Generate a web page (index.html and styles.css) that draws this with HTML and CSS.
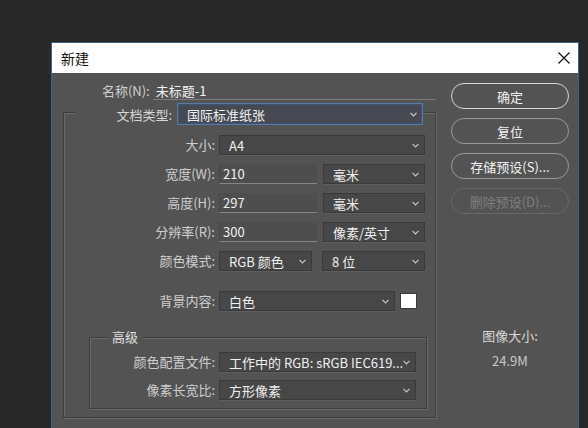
FILE: index.html
```html
<!DOCTYPE html>
<html lang="zh-CN">
<head>
<meta charset="utf-8">
<title>新建</title>
<link rel="stylesheet" href="styles.css">
</head>
<body>
<div class="page">
  <div class="dialog">
    <div class="titlebar">
      <span class="title">新建</span>
      <svg class="close" width="12" height="12" viewBox="0 0 12 12"><path d="M0.5 0.5L11.5 11.5M11.5 0.5L0.5 11.5" stroke="#111" stroke-width="1.2" fill="none"/></svg>
    </div>
    <div class="content">
      <div class="form">
        <div class="name-row">
          <span class="name-label">名称(N):</span>
          <span class="name-field">未标题-1</span>
        </div>
        <fieldset class="group main">
          <legend class="doctype">
            <span class="doc-label">文档类型:</span>
            <span class="select focus w-doc">国际标准纸张<svg class="chev" width="7" height="5" viewBox="0 0 7 5"><path d="M0.5 0.8L3.5 3.8L6.5 0.8" stroke="#d0d0d0" stroke-width="1.2" fill="none"/></svg></span>
          </legend>
          <div class="grid grid-main">
            <span class="label">大小:</span>
            <span class="select w-full">A4<svg class="chev" width="7" height="5" viewBox="0 0 7 5"><path d="M0.5 0.8L3.5 3.8L6.5 0.8" stroke="#c8c8c8" stroke-width="1.2" fill="none"/></svg></span>

            <span class="label">宽度(W):</span>
            <span class="pair">
              <span class="field w-num">210</span>
              <span class="select w-unit">毫米<svg class="chev" width="7" height="5" viewBox="0 0 7 5"><path d="M0.5 0.8L3.5 3.8L6.5 0.8" stroke="#c8c8c8" stroke-width="1.2" fill="none"/></svg></span>
            </span>

            <span class="label">高度(H):</span>
            <span class="pair">
              <span class="field w-num">297</span>
              <span class="select w-unit">毫米<svg class="chev" width="7" height="5" viewBox="0 0 7 5"><path d="M0.5 0.8L3.5 3.8L6.5 0.8" stroke="#c8c8c8" stroke-width="1.2" fill="none"/></svg></span>
            </span>

            <span class="label">分辨率(R):</span>
            <span class="pair">
              <span class="field w-num">300</span>
              <span class="select w-unit">像素/英寸<svg class="chev" width="7" height="5" viewBox="0 0 7 5"><path d="M0.5 0.8L3.5 3.8L6.5 0.8" stroke="#c8c8c8" stroke-width="1.2" fill="none"/></svg></span>
            </span>

            <span class="label">颜色模式:</span>
            <span class="pair gap10">
              <span class="select w-mode">RGB 颜色<svg class="chev" width="7" height="5" viewBox="0 0 7 5"><path d="M0.5 0.8L3.5 3.8L6.5 0.8" stroke="#c8c8c8" stroke-width="1.2" fill="none"/></svg></span>
              <span class="select w-bits">8 位<svg class="chev" width="7" height="5" viewBox="0 0 7 5"><path d="M0.5 0.8L3.5 3.8L6.5 0.8" stroke="#c8c8c8" stroke-width="1.2" fill="none"/></svg></span>
            </span>

            <span class="label spaced">背景内容:</span>
            <span class="pair gap5 spaced">
              <span class="select w-bg">白色<svg class="chev" width="7" height="5" viewBox="0 0 7 5"><path d="M0.5 0.8L3.5 3.8L6.5 0.8" stroke="#c8c8c8" stroke-width="1.2" fill="none"/></svg></span>
              <span class="swatch"></span>
            </span>
          </div>

          <fieldset class="group adv">
            <legend class="adv-legend">高级</legend>
            <div class="grid grid-adv">
              <span class="label">颜色配置文件:</span>
              <span class="select w-adv">工作中的 RGB: sRGB IEC619...<svg class="chev" width="7" height="5" viewBox="0 0 7 5"><path d="M0.5 0.8L3.5 3.8L6.5 0.8" stroke="#c8c8c8" stroke-width="1.2" fill="none"/></svg></span>

              <span class="label">像素长宽比:</span>
              <span class="select w-adv">方形像素<svg class="chev" width="7" height="5" viewBox="0 0 7 5"><path d="M0.5 0.8L3.5 3.8L6.5 0.8" stroke="#c8c8c8" stroke-width="1.2" fill="none"/></svg></span>
            </div>
          </fieldset>
        </fieldset>
      </div>

      <div class="side">
        <div class="btn primary">确定</div>
        <div class="btn">复位</div>
        <div class="btn">存储预设(S)...</div>
        <div class="btn disabled">删除预设(D)...</div>
        <div class="size-title">图像大小:</div>
        <div class="size-value">24.9M</div>
      </div>
    </div>
  </div>
</div>
</body>
</html>
```

FILE: styles.css
```css
html, body {
  margin: 0;
  padding: 0;
}

body {
  width: 588px;
  height: 428px;
  overflow: hidden;
  background: #282828;
  font-family: "Noto Sans CJK SC", "Noto Sans", sans-serif;
  font-size: 13px;
  color: #d2d2d2;
}

.page {
  padding: 42px 0 0 51px;
}

.dialog {
  width: 526px;
  height: 385px;
  border: 1px solid #3e6288;
  border-bottom: none;
  background: #535353;
}

.titlebar {
  height: 30px;
  background: #ffffff;
  display: flex;
  align-items: center;
  justify-content: space-between;
  padding: 0 8px 0 9px;
}

.title {
  color: #111;
  font-size: 14px;
  line-height: 16px;
}

.close {
  display: block;
}

.content {
  display: flex;
}

.form {
  width: 384px;
  padding-top: 10px;
}

.name-row {
  display: flex;
  height: 17px;
}

.name-label {
  width: 98px;
  text-align: right;
  line-height: 16px;
  color: #cfcfcf;
}

.name-field {
  margin-left: 3px;
  width: 281px;
  padding-left: 3px;
  line-height: 16px;
  border-bottom: 1px solid #7c7c7c;
  color: #f2f2f2;
}

.group {
  margin: 0;
  padding: 0;
  min-width: 0;
  border: 1px solid #3d3d3d;
  box-shadow: inset 1px 1px 0 #686868, 1px 1px 0 #686868;
}

.main {
  margin-left: 11px;
  width: 373px;
  box-sizing: border-box;
  padding: 10px 0 8px 0;
}

.doctype {
  margin-left: 11px;
  padding: 3px 0 0 0;
  display: flex;
  align-items: center;
  background: #535353;
}

.doc-label {
  width: 97px;
  text-align: right;
  margin-right: 5px;
  color: #d6d6d6;
}

.grid {
  display: grid;
  align-items: center;
}

.grid-main {
  grid-template-columns: 151px 206px;
  column-gap: 4px;
  row-gap: 9px;
}

.grid-adv {
  grid-template-columns: 125px 197px;
  column-gap: 4px;
  row-gap: 8px;
}

.label {
  text-align: right;
  line-height: 20px;
  color: #cfcfcf;
  white-space: nowrap;
}

.spaced {
  margin-top: 11px;
}

.pair {
  display: flex;
  gap: 6px;
  align-items: center;
}

.gap10 {
  gap: 10px;
}

.gap5 {
  gap: 5px;
}

.select {
  position: relative;
  display: flex;
  align-items: center;
  box-sizing: border-box;
  height: 20px;
  padding-left: 9px;
  background: #474747;
  border: 1px solid #3a3a3a;
  box-shadow: 0 1px 0 #5e5e5e;
  color: #f0f0f0;
  white-space: nowrap;
  overflow: hidden;
}

.select.focus {
  height: 22px;
  padding-left: 9px;
  background: #464952;
  border: 1px solid #587aa6;
  box-shadow: inset 0 0 0 1px #3c5475;
}

.chev {
  position: absolute;
  right: 5px;
  top: 50%;
  margin-top: -2px;
}

.field {
  box-sizing: border-box;
  height: 20px;
  line-height: 19px;
  padding-left: 3px;
  background: #4e4e4e;
  border-left: 1px solid #474747;
  border-bottom: 1px solid #858585;
  color: #f0f0f0;
}

.w-doc { width: 246px; }
.w-full { width: 206px; }
.w-num { width: 98px; }
.w-unit { width: 102px; }
.w-mode { width: 93px; }
.w-bits { width: 103px; }
.w-bg { width: 176px; }
.w-adv { width: 197px; }

.swatch {
  width: 15px;
  height: 14px;
  background: #ffffff;
  border: 1px solid #3a3a3a;
}

.adv {
  margin: 18px 8px 0 25px;
  padding: 7px 0 8px 0;
}

.adv-legend {
  margin-left: 18px;
  padding: 0 4px;
  line-height: 16px;
  background: #535353;
  color: #e0e0e0;
}

.side {
  width: 142px;
  box-sizing: border-box;
  padding: 10px 0 0 15px;
}

.btn {
  width: 118px;
  height: 26px;
  box-sizing: border-box;
  margin-bottom: 9px;
  border: 1px solid #999999;
  border-radius: 13px;
  display: flex;
  align-items: center;
  justify-content: center;
  color: #f2f2f2;
  font-size: 13px;
}

.btn.primary {
  border: 1.5px solid #d6d6d6;
}

.btn.disabled {
  border-color: #686868;
  color: #7e7e7e;
}

.size-title {
  width: 118px;
  margin-top: 114px;
  text-align: center;
  line-height: 16px;
  color: #d8d8d8;
}

.size-value {
  width: 118px;
  margin-top: 9px;
  text-align: center;
  line-height: 16px;
  color: #c8c8c8;
}
```
